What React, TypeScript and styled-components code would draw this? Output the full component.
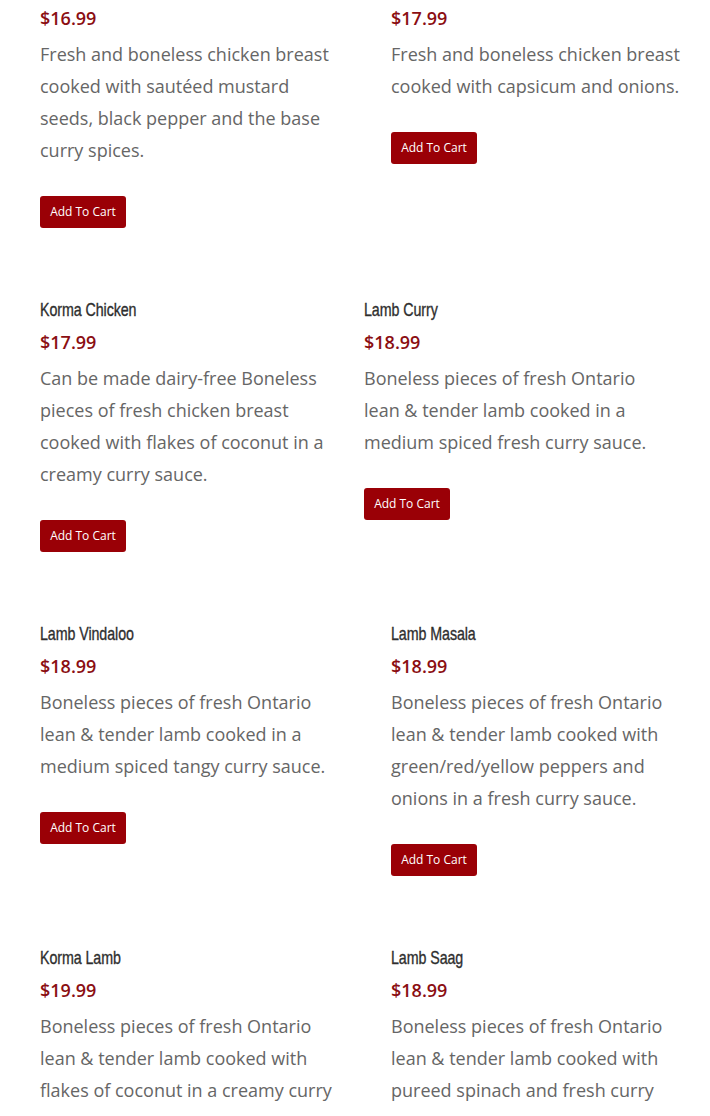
import React from "react";
import styled, { createGlobalStyle } from "styled-components";

const GlobalStyle = createGlobalStyle`
  html, body { margin: 0; padding: 0; background: #ffffff; }
  body { font-family: "Open Sans", "Liberation Sans", sans-serif; }
`;

type Item = { title?: string; price: string; desc: string };
type RowData = { split: number; items: [Item, Item] };

const rows: RowData[] = [
  {
    split: 351,
    items: [
      {
        price: "$16.99",
        desc: "Fresh and boneless chicken breast cooked with sautéed mustard seeds, black pepper and the base curry spices.",
      },
      {
        price: "$17.99",
        desc: "Fresh and boneless chicken breast cooked with capsicum and onions.",
      },
    ],
  },
  {
    split: 324,
    items: [
      {
        title: "Korma Chicken",
        price: "$17.99",
        desc: "Can be made dairy-free Boneless pieces of fresh chicken breast cooked with flakes of coconut in a creamy curry sauce.",
      },
      {
        title: "Lamb Curry",
        price: "$18.99",
        desc: "Boneless pieces of fresh Ontario lean & tender lamb cooked in a medium spiced fresh curry sauce.",
      },
    ],
  },
  {
    split: 351,
    items: [
      {
        title: "Lamb Vindaloo",
        price: "$18.99",
        desc: "Boneless pieces of fresh Ontario lean & tender lamb cooked in a medium spiced tangy curry sauce.",
      },
      {
        title: "Lamb Masala",
        price: "$18.99",
        desc: "Boneless pieces of fresh Ontario lean & tender lamb cooked with green/red/yellow peppers and onions in a fresh curry sauce.",
      },
    ],
  },
  {
    split: 351,
    items: [
      {
        title: "Korma Lamb",
        price: "$19.99",
        desc: "Boneless pieces of fresh Ontario lean & tender lamb cooked with flakes of coconut in a creamy curry sauce.",
      },
      {
        title: "Lamb Saag",
        price: "$18.99",
        desc: "Boneless pieces of fresh Ontario lean & tender lamb cooked with pureed spinach and fresh curry sauce.",
      },
    ],
  },
];

const Menu = styled.div`
  display: flex;
  flex-direction: column;
  gap: 66px;
  padding: 2px 0 0 40px;
  height: 1116px;
  overflow: hidden;
  box-sizing: border-box;
`;

const Row = styled.div<{ $split: number }>`
  display: grid;
  grid-template-columns: ${(p) => p.$split}px 300px;
  align-items: start;
`;

const Card = styled.div`
  display: flex;
  flex-direction: column;
  align-items: flex-start;
  width: 300px;
`;

const Title = styled.h3`
  margin: 0;
  display: inline-block;
  white-space: nowrap;
  font-family: "Liberation Sans", Arial, sans-serif;
  font-weight: 400;
  font-size: 19px;
  line-height: 32px;
  color: #2e2e2e;
  -webkit-text-stroke: 0.35px #2e2e2e;
  transform: scaleX(0.75);
  transform-origin: left center;
  letter-spacing: -0.1px;
`;

const Price = styled.div`
  font-family: "Open Sans", sans-serif;
  font-weight: 600;
  font-size: 18px;
  line-height: 32px;
  color: #8b0e12;
`;

const Desc = styled.p`
  margin: 4px 0 0;
  font-family: "Open Sans", sans-serif;
  font-size: 18px;
  line-height: 32px;
  color: #666666;
`;

const CartButton = styled.button`
  margin-top: 30px;
  width: 86px;
  height: 32px;
  padding: 0;
  border: none;
  border-radius: 3px;
  background: #9a0006;
  color: #ffffff;
  font-family: "Open Sans", sans-serif;
  font-size: 12px;
  line-height: 32px;
  cursor: pointer;
`;

export default function App() {
  return (
    <>
      <GlobalStyle />
      <Menu>
        {rows.map((row, i) => (
          <Row key={i} $split={row.split}>
            {row.items.map((item, j) => (
              <Card key={j}>
                {item.title && <Title>{item.title}</Title>}
                <Price>{item.price}</Price>
                <Desc>{item.desc}</Desc>
                <CartButton>Add To Cart</CartButton>
              </Card>
            ))}
          </Row>
        ))}
      </Menu>
    </>
  );
}
